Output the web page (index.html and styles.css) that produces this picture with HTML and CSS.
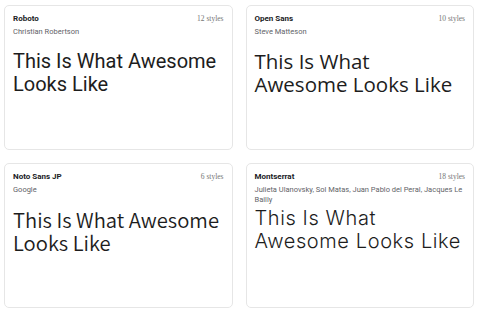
FILE: index.html
```html
<!DOCTYPE html>
<html lang="en">
<head>
    <meta charset="UTF-8" />
    <meta name="viewport" content="width=device-width, initial-scale=1.0" />
    <title>Fonts</title>
    <link rel="stylesheet" href="styles.css">
</head>
<body>
  <main class="grid">
    <article class="card">
      <div class="card-head">
        <span class="family">Roboto</span>
        <span class="styles">12 styles</span>
      </div>
      <div class="author">Christian Robertson</div>
      <p class="sample sample-roboto">This Is What Awesome Looks Like</p>
    </article>

    <article class="card">
      <div class="card-head">
        <span class="family">Open Sans</span>
        <span class="styles">10 styles</span>
      </div>
      <div class="author">Steve Matteson</div>
      <p class="sample sample-opensans">This Is What Awesome Looks Like</p>
    </article>

    <article class="card">
      <div class="card-head">
        <span class="family">Noto Sans JP</span>
        <span class="styles">6 styles</span>
      </div>
      <div class="author">Google</div>
      <p class="sample sample-noto">This Is What Awesome Looks Like</p>
    </article>

    <article class="card">
      <div class="card-head">
        <span class="family">Montserrat</span>
        <span class="styles">18 styles</span>
      </div>
      <div class="author">Julieta Ulanovsky, Sol Matas, Juan Pablo del Peral, Jacques Le Bailly</div>
      <p class="sample sample-montserrat">This Is What Awesome Looks Like</p>
    </article>
  </main>
</body>
</html>
```

FILE: styles.css
```css
* {
    margin: 0;
    padding: 0;
    box-sizing: border-box;
}

body {
    font-family: Roboto, sans-serif;
    background: #fff;
    color: #202124;
}

.grid {
    display: grid;
    grid-template-columns: 1fr 1fr;
    gap: 13px;
    padding: 5px 6px 0 4px;
}

.card {
    height: 145px;
    border: 1px solid #e6e6e6;
    border-radius: 5px;
    padding: 8px 8px 0 8px;
}

.card-head {
    display: flex;
    justify-content: space-between;
    align-items: baseline;
    height: 10px;
}

.family {
    font-size: 8px;
    font-weight: 700;
    color: #202124;
}

.styles {
    font-family: "Liberation Serif", serif;
    font-size: 7.5px;
    color: #757575;
}

.author {
    margin-top: 3px;
    font-size: 7.5px;
    line-height: 10px;
    color: #5f6368;
}

.sample {
    margin-top: 13px;
    font-size: 20px;
    line-height: 23px;
    color: #1d1d1d;
}

.sample-roboto {
    font-family: Roboto, sans-serif;
}

.sample-opensans {
    font-family: "Open Sans", sans-serif;
    font-size: 20.5px;
}

.sample-noto {
    margin-right: -5px;
    font-family: "Noto Sans CJK JP", sans-serif;
    font-size: 20.2px;
    font-weight: 350;
}

.sample-montserrat {
    margin-top: 2px;
    margin-right: -5px;
    font-family: Inter, sans-serif;
    font-size: 20px;
    font-weight: 350;
    letter-spacing: 0.6px;
}
```
